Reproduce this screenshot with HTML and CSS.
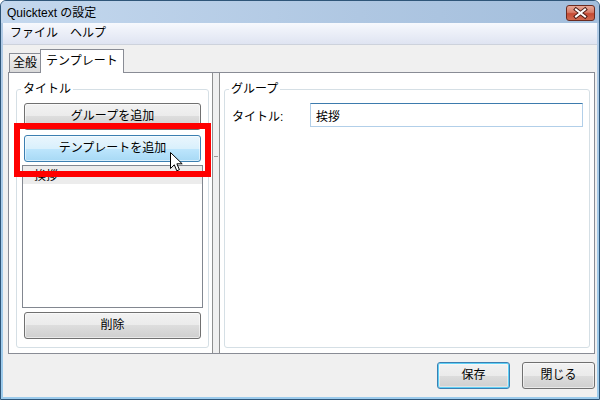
FILE: index.html
```html
<!DOCTYPE html>
<html lang="ja">
<head>
  <meta charset="UTF-8">
  <title>Quicktext の設定</title>
  <link rel="stylesheet" href="styles.css">
</head>
<body>
  <div class="window">
    <div class="titlebar">
      <span class="title">Quicktext の設定</span>
      <div class="close-btn">
        <svg width="27" height="14" viewBox="0 0 27 14">
          <path d="M9 3.5 L18 10.5 M18 3.5 L9 10.5" stroke="#4b1c14" stroke-width="4" stroke-linecap="square"/>
          <path d="M9 3.5 L18 10.5 M18 3.5 L9 10.5" stroke="#fff" stroke-width="2" stroke-linecap="square"/>
        </svg>
      </div>
    </div>
    <div class="frame">
      <div class="menubar">
        <span class="menu-item">ファイル</span>
        <span class="menu-item">ヘルプ</span>
      </div>
      <div class="client">
        <div class="tabs">
          <div class="tab">全般</div>
          <div class="tab active">テンプレート</div>
        </div>
        <div class="tab-page">
          <div class="panel panel-left">
            <fieldset class="group">
              <legend>タイトル</legend>
              <button class="btn">グループを追加</button>
              <button class="btn btn-hot">テンプレートを追加</button>
              <div class="tree">
                <div class="tree-item selected">挨拶</div>
              </div>
              <button class="btn">削除</button>
            </fieldset>
          </div>
          <div class="splitter"><span class="grip"></span></div>
          <div class="panel panel-right">
            <fieldset class="group">
              <legend>グループ</legend>
              <div class="field-row">
                <label for="title">タイトル:</label>
                <input id="title" type="text" value="挨拶">
              </div>
            </fieldset>
          </div>
        </div>
        <div class="footer">
          <button class="btn btn-default">保存</button>
          <button class="btn">閉じる</button>
        </div>
      </div>
    </div>

    <!-- annotation over the screenshot -->
    <div class="highlight"></div>
    <svg class="cursor" width="14" height="22" viewBox="0 0 14 22">
      <path d="M0.5 0.5 V16.5 L4.3 12.8 L6.8 18.8 L9.4 17.7 L6.9 11.8 H12.2 Z" fill="#fff" stroke="#000" stroke-width="1" stroke-linejoin="miter"/>
    </svg>
  </div>
</body>
</html>
```

FILE: styles.css
```css
* {
  margin: 0;
  padding: 0;
  box-sizing: border-box;
}
body {
  background: #fff;
  font-family: "Liberation Sans", "Noto Sans CJK JP", sans-serif;
  font-size: 12px;
  color: #000;
}
.window {
  position: relative;
  width: 600px;
  height: 400px;
  border: 1px solid #2f5679;
  border-radius: 6px 6px 0 0;
  background: linear-gradient(#b3cbe6, #9ccbec);
  overflow: hidden;
}
.titlebar {
  display: flex;
  justify-content: space-between;
  align-items: flex-start;
  height: 22px;
  background: linear-gradient(to right, #c4d8ee, #afc7e2 60%, #a3bedc);
}
.title {
  padding: 2px 0 0 6px;
  line-height: 20px;
}
.close-btn {
  width: 29px;
  height: 16px;
  margin: 4px 4px 0 0;
  border: 1px solid #6b2a1f;
  border-radius: 3px;
  background: linear-gradient(#e7a797, #d87d68 45%, #c54a33 55%, #cf6a50);
}
.close-btn svg {
  display: block;
}
.frame {
  margin: 0 2px 2px;
}
.menubar {
  display: flex;
  height: 22px;
  padding-left: 1px;
  background: linear-gradient(#f7f9fd, #eef1f9 35%, #dfe4f2);
  border-bottom: 1px solid #cdd2dc;
}
.menu-item {
  padding: 0 6px;
  line-height: 21px;
}
.client {
  height: 352px;
  background: #f0f0f0;
}
.tabs {
  display: flex;
  align-items: flex-end;
  height: 27px;
  padding-left: 6px;
}
.tab {
  height: 19px;
  padding: 0 3px;
  border: 1px solid #898c95;
  border-bottom: none;
  border-right: none;
  background: linear-gradient(#f3f3f3, #e6e6e6 50%, #d9d9d9);
  line-height: 18px;
}
.tab.active {
  position: relative;
  z-index: 1;
  height: 24px;
  margin-bottom: -1px;
  padding: 0 5px;
  border-right: 1px solid #898c95;
  background: #fff;
  line-height: 22px;
}
.tab-page {
  display: flex;
  height: 282px;
  margin: 0 2px 0 5px;
  border: 1px solid #898c95;
  background: #fff;
}
.panel {
  display: flex;
  flex-direction: column;
}
.panel-left {
  width: 204px;
  border-right: 1px solid #8e8f8f;
}
.panel-right {
  flex: 1;
  border-left: 1px solid #8e8f8f;
}
.splitter {
  width: 6px;
  background: #f0f0f0;
}
.grip {
  display: block;
  width: 4px;
  height: 1px;
  margin: 83px 0 0 1px;
  background: #9a9a9a;
}
.group {
  flex: 1;
  min-width: 0;
  padding: 7px 7px 8px;
  border: 1px solid #d5dfe5;
  border-radius: 3px;
}
.panel-left .group {
  margin: 9px 3px 5px 7px;
}
.panel-right .group {
  margin: 9px 4px 5px 4px;
  padding-right: 6px;
}
.group legend {
  margin-left: -3px;
  padding: 0 2px;
  line-height: 14px;
}
.btn {
  display: block;
  width: 100%;
  height: 27px;
  border: 1px solid #707070;
  border-radius: 3px;
  background: linear-gradient(#f2f2f2, #ebebeb 50%, #dddddd 50%, #cfcfcf);
  box-shadow: inset 0 0 0 1px rgba(255, 255, 255, 0.55);
  font: 12px/25px "Liberation Sans", "Noto Sans CJK JP", sans-serif;
  color: #000;
}
.btn + .btn {
  margin-top: 5px;
}
.btn-hot {
  border-color: #3c7fb1;
  background: linear-gradient(#eaf6fd, #d9f0fc 50%, #bee6fd 50%, #a7d9f5);
}
.tree {
  height: 143px;
  margin: 3px -2px 4px;
  border: 1px solid #828790;
  background: #fff;
}
.tree-item {
  height: 18px;
  padding-left: 11px;
  line-height: 20px;
}
.tree-item.selected {
  background: #ececec;
}
.field-row {
  display: flex;
  align-items: center;
}
.field-row label {
  width: 78px;
  flex-shrink: 0;
}
.field-row input {
  width: 273px;
  height: 24px;
  padding: 0 5px;
  border: 1px solid #b2cfe9;
  border-top-color: #3d7bad;
  font: 12px "Liberation Sans", "Noto Sans CJK JP", sans-serif;
  outline: none;
}
.footer {
  display: flex;
  justify-content: flex-end;
  gap: 12px;
  height: 43px;
  padding: 8px 2px 0 0;
}
.footer .btn {
  width: 73px;
  margin: 0;
}
.btn-default {
  border-color: #3c7fb1;
  box-shadow: inset 0 0 0 1px #5fd0f6, inset 0 0 0 2px rgba(255, 255, 255, 0.4);
}
.highlight {
  position: absolute;
  left: 13px;
  top: 122px;
  width: 197px;
  height: 54px;
  border: 6px solid #ff0000;
}
.cursor {
  position: absolute;
  left: 169px;
  top: 151px;
}
```
